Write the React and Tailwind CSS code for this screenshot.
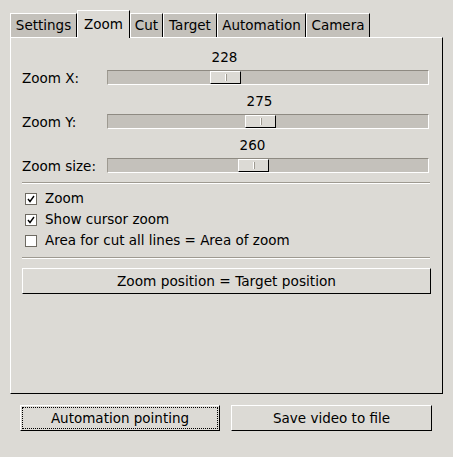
import React from "react";

const FONT = { fontFamily: '"DejaVu Sans", "Liberation Sans", sans-serif' };

function Tab({ label, selected, w }) {
  if (selected) {
    return (
      <div
        className="relative z-10 -mb-px flex h-[28px] items-center justify-center border-l border-t border-r border-l-white border-t-white border-r-black bg-[#dcdad5]"
        style={{ width: w + "px" }}
      >
        {label}
      </div>
    );
  }
  return (
    <div
      className="flex h-[24px] items-center justify-center border-l border-t border-r border-l-white border-t-white border-r-black bg-[#c4c1bb]"
      style={{ width: w + "px" }}
    >
      {label}
    </div>
  );
}

function Slider({ label, value, handleLeft }) {
  return (
    <div className="flex flex-col">
      <div className="relative h-[16px] leading-[16px]">
        <div
          className="absolute top-0 text-center"
          style={{ left: 85 + handleLeft - 10 + "px", width: "51px" }}
        >
          {value}
        </div>
      </div>
      <div className="mt-[5px] flex h-[15px] items-center">
        <div className="w-[85px] pt-[2px] leading-[15px]">{label}</div>
        <div className="relative h-[15px] w-[322px] border-l border-t border-r border-b border-l-[#9e9a91] border-t-[#8e8a82] border-r-white border-b-white bg-[#c4c1bb]">
          <div
            className="absolute top-0 flex h-[13px] w-[31px] items-center justify-center border-l border-t border-r border-b border-l-white border-t-white border-r-black border-b-black bg-[#dcdad5]"
            style={{ left: handleLeft + "px" }}
          >
            <div className="h-[7px] w-px bg-white" />
            <div className="h-[7px] w-px bg-[#9e9a91]" />
          </div>
        </div>
      </div>
    </div>
  );
}

function Separator() {
  return (
    <div className="flex w-[408px] flex-col">
      <div className="h-px bg-[#9e9a91]" />
      <div className="h-px bg-white" />
    </div>
  );
}

function Check({ checked, label }) {
  return (
    <div className="flex h-[21px] items-center">
      <div className="ml-[3px] flex h-[12px] w-[12px] items-center justify-center border border-[#6e6a62] bg-white">
        {checked && (
          <svg width="8" height="8" viewBox="0 0 8 8">
            <path d="M1 4 L3 6.5 L7 1" fill="none" stroke="#000" strokeWidth="1.4" />
          </svg>
        )}
      </div>
      <div className="ml-[8px]">{label}</div>
    </div>
  );
}

function Button({ children, className = "", focus }) {
  return (
    <div
      className={
        "relative flex h-[26px] items-center justify-center border-l border-t border-r border-b border-l-white border-t-white border-r-black border-b-black bg-[#dcdad5] " +
        className
      }
    >
      {focus && (
        <div className="absolute inset-[1px] border border-dotted border-black" />
      )}
      <span className="relative pt-[1px]">{children}</span>
    </div>
  );
}

export default function App() {
  return (
    <div
      className="h-[457px] w-[453px] overflow-hidden bg-[#dcdad5] px-[10px] pt-[10px] text-[13.5px] text-black"
      style={FONT}
    >
      <div className="flex h-[27px] items-end">
        <Tab label="Settings" w={67} />
        <Tab label="Zoom" selected w={53} />
        <Tab label="Cut" w={33} />
        <Tab label="Target" w={54} />
        <Tab label="Automation" w={89} />
        <Tab label="Camera" w={64} />
      </div>
      <div className="flex h-[357px] w-[433px] flex-col border-l border-t border-r border-b border-l-white border-t-white border-r-black border-b-black pl-[11px] pt-[11px]">
        <div className="flex flex-col gap-[8px]">
          <Slider label="Zoom X:" value="228" handleLeft={102} />
          <Slider label="Zoom Y:" value="275" handleLeft={137} />
          <Slider label="Zoom size:" value="260" handleLeft={130} />
        </div>
        <div className="mt-[9px]">
          <Separator />
        </div>
        <div className="mt-[4px] flex flex-col">
          <Check checked label="Zoom" />
          <Check checked label="Show cursor zoom" />
          <Check label="Area for cut all lines = Area of zoom" />
        </div>
        <div className="mt-[6px]">
          <Separator />
        </div>
        <Button className="mt-[9px] w-[409px] text-[13.7px]">Zoom position = Target position</Button>
      </div>
      <div className="mt-[11px] flex">
        <Button className="ml-[10px] w-[200px]" focus>
          Automation pointing
        </Button>
        <Button className="ml-[11px] w-[201px]">Save video to file</Button>
      </div>
    </div>
  );
}
